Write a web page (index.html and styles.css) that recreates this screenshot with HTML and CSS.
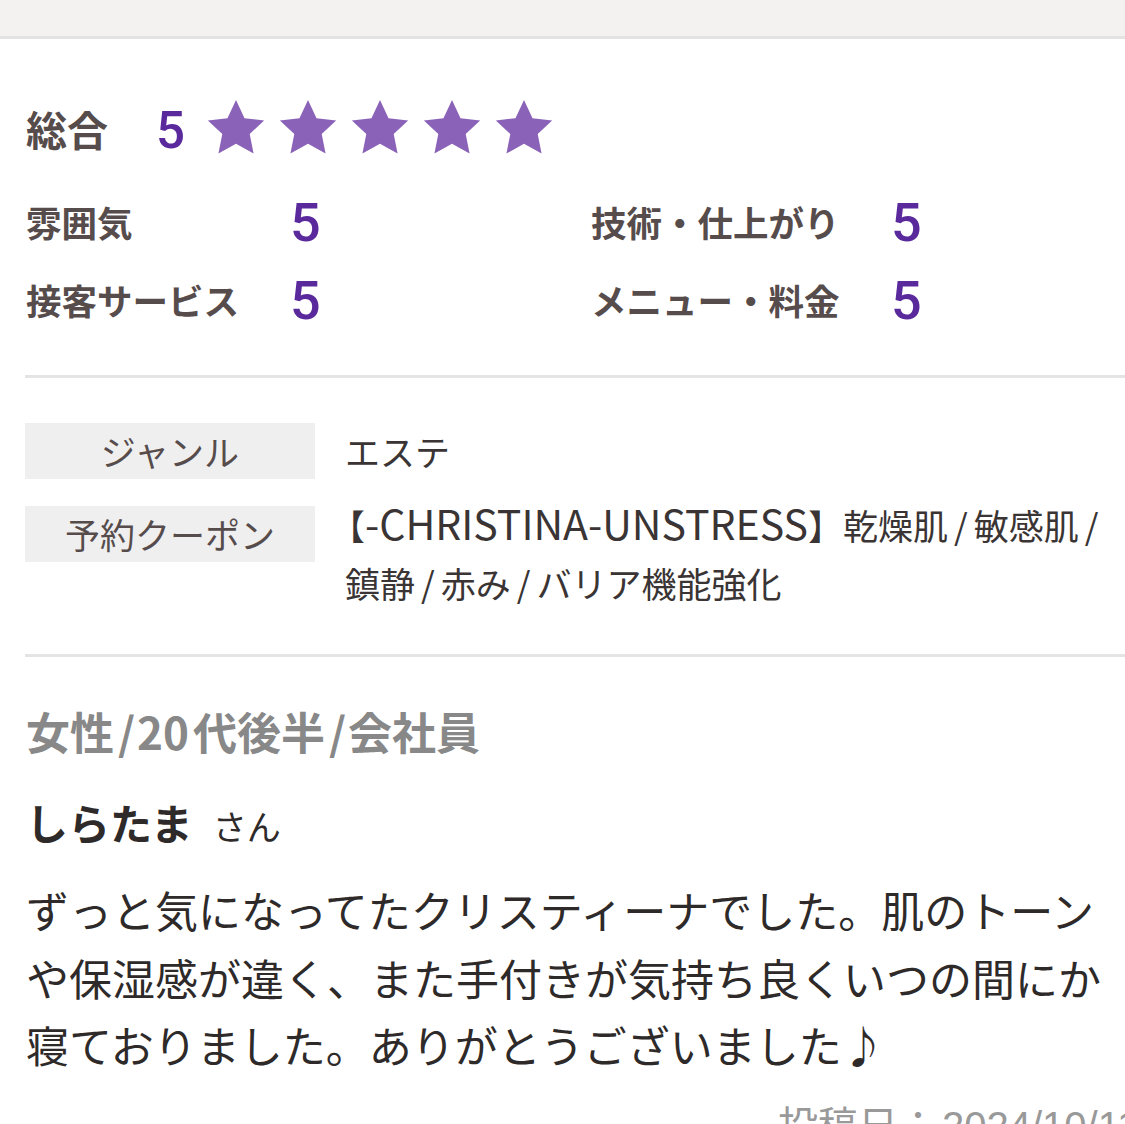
FILE: index.html
```html
<!DOCTYPE html>
<html lang="ja">
<head>
<meta charset="utf-8">
<link rel="stylesheet" href="styles.css">
</head>
<body>
<div class="topbar"></div>
<div class="page">
  <div class="overall">
    <span class="overall-label">総合</span>
    <span class="overall-num">5</span>
    <span class="stars">
      <svg class="star" viewBox="0 0 24 24"><path d="M12 1.2l3.3 7 7.6.9-5.6 5.2 1.5 7.6L12 18.1l-6.8 3.8 1.5-7.6L1.1 9.1l7.6-.9z"/></svg>
      <svg class="star" viewBox="0 0 24 24"><path d="M12 1.2l3.3 7 7.6.9-5.6 5.2 1.5 7.6L12 18.1l-6.8 3.8 1.5-7.6L1.1 9.1l7.6-.9z"/></svg>
      <svg class="star" viewBox="0 0 24 24"><path d="M12 1.2l3.3 7 7.6.9-5.6 5.2 1.5 7.6L12 18.1l-6.8 3.8 1.5-7.6L1.1 9.1l7.6-.9z"/></svg>
      <svg class="star" viewBox="0 0 24 24"><path d="M12 1.2l3.3 7 7.6.9-5.6 5.2 1.5 7.6L12 18.1l-6.8 3.8 1.5-7.6L1.1 9.1l7.6-.9z"/></svg>
      <svg class="star" viewBox="0 0 24 24"><path d="M12 1.2l3.3 7 7.6.9-5.6 5.2 1.5 7.6L12 18.1l-6.8 3.8 1.5-7.6L1.1 9.1l7.6-.9z"/></svg>
    </span>
  </div>
  <div class="subs">
    <div class="sub"><span class="sub-label">雰囲気</span><span class="sub-num">5</span></div>
    <div class="sub sub-right"><span class="sub-label">技術・仕上がり</span><span class="sub-num">5</span></div>
    <div class="sub"><span class="sub-label">接客サービス</span><span class="sub-num">5</span></div>
    <div class="sub sub-right"><span class="sub-label">メニュー・料金</span><span class="sub-num">5</span></div>
  </div>
  <div class="divider"></div>
  <div class="info">
    <div class="info-row">
      <div class="info-label">ジャンル</div>
      <div class="info-value">エステ</div>
    </div>
    <div class="info-row info-row-coupon">
      <div class="info-label">予約クーポン</div>
      <div class="info-value coupon">【<span class="latin">-CHRISTINA-UNSTRESS</span>】乾燥肌<span class="sl">/</span>敏感肌<span class="sl">/</span><br>鎮静<span class="sl">/</span>赤み<span class="sl">/</span>バリア機能強化</div>
    </div>
  </div>
  <div class="divider divider2"></div>
  <div class="profile">女性<span class="psl">/</span><span class="pnum">20</span>代後半<span class="psl">/</span>会社員</div>
  <div class="name">しらたま<span class="san">さん</span></div>
  <p class="review">ずっと気になってたクリスティーナでした。肌のトーンや保湿感が違く、また手付きが気持ち良くいつの間にか寝ておりました。ありがとうございました♪</p>
  <div class="date">投稿日：<span class="date-num">2024/10/11</span></div>
</div>
</body>
</html>
```
FILE: styles.css
```css
html, body {
  margin: 0;
  padding: 0;
  background: #ffffff;
  overflow: hidden;
}
body {
  font-family: "Noto Sans CJK JP", "Noto Sans", sans-serif;
  color: #333333;
  width: 1125px;
  height: 1124px;
}
.topbar {
  height: 36px;
  background: #f3f2f1;
  border-bottom: 3px solid #e3e3e3;
}
.page {
  padding-left: 25px;
}
.overall {
  display: flex;
  align-items: center;
  height: 60px;
  margin-top: 59px;
  padding-left: 1px;
}
.overall-label {
  font-size: 41px;
  font-weight: 700;
  color: #574c4c;
  width: 130px;
}
.overall-num {
  font-family: Roboto, "Liberation Sans", Arial, sans-serif;
  font-weight: 500;
  font-size: 51px;
  color: #5a2a9c;
  width: 49px;
  line-height: 1;
  margin-top: 4px;
}
.stars {
  display: flex;
  gap: 10px;
}
.star {
  width: 62px;
  height: 62px;
  fill: #8a62b7;
}
.subs {
  display: grid;
  grid-template-columns: 565px 1fr;
  row-gap: 22px;
  margin-top: 35px;
  padding-left: 1px;
}
.sub {
  display: flex;
  align-items: center;
  height: 56px;
}
.sub-label {
  font-size: 35.5px;
  font-weight: 700;
  color: #574c4c;
  width: 264px;
}
.sub-right .sub-label {
  width: 300px;
}
.sub-num {
  font-family: Roboto, "Liberation Sans", Arial, sans-serif;
  font-weight: 500;
  font-size: 54px;
  color: #5a2a9c;
  line-height: 1;
  margin-top: 4px;
}
.divider {
  height: 3px;
  background: #e4e4e4;
  margin-top: 48px;
}
.info {
  margin-top: 45px;
  display: flex;
  flex-direction: column;
  gap: 26px;
}
.info-row {
  display: flex;
  align-items: flex-start;
}
.info-label {
  width: 290px;
  height: 56px;
  flex: none;
  background: #efefef;
  color: #574c4c;
  font-size: 35px;
  line-height: 56px;
  text-align: center;
}
.info-value {
  padding-left: 30px;
  font-size: 35px;
  line-height: 58px;
  color: #3a3434;
  margin-top: -1px;
}
.coupon {
  padding-left: 30px;
  text-indent: -15px;
  margin-top: -10px;
}
.latin {
  font-size: 41px;
  line-height: 1;
}
.sl {
  margin: 0 6px;
}
.divider2 {
  margin-top: 42px;
}
.profile {
  margin-top: 46px;
  font-size: 44px;
  font-weight: 700;
  color: #888888;
  line-height: 56px;
  padding-left: 1px;
}
.psl {
  margin: 0 2px 0 4px;
}
.pnum {
  margin-right: 4px;
}
.name {
  margin-top: 35px;
  font-size: 42px;
  font-weight: 700;
  color: #2e2a2a;
  line-height: 56px;
  padding-left: 1px;
}
.san {
  font-size: 34px;
  font-weight: 400;
  margin-left: 20px;
}
.review {
  margin: 22px 0 0 0;
  width: 1076px;
  padding-left: 1px;
  font-size: 43px;
  line-height: 67.5px;
  color: #2e2a2a;
}
.date {
  margin-top: 24px;
  padding-left: 753px;
  font-size: 40px;
  color: #999999;
  white-space: nowrap;
  line-height: 40px;
}
.date-num {
  font-family: "Liberation Sans", Arial, sans-serif;
  margin-left: 4px;
}
```
